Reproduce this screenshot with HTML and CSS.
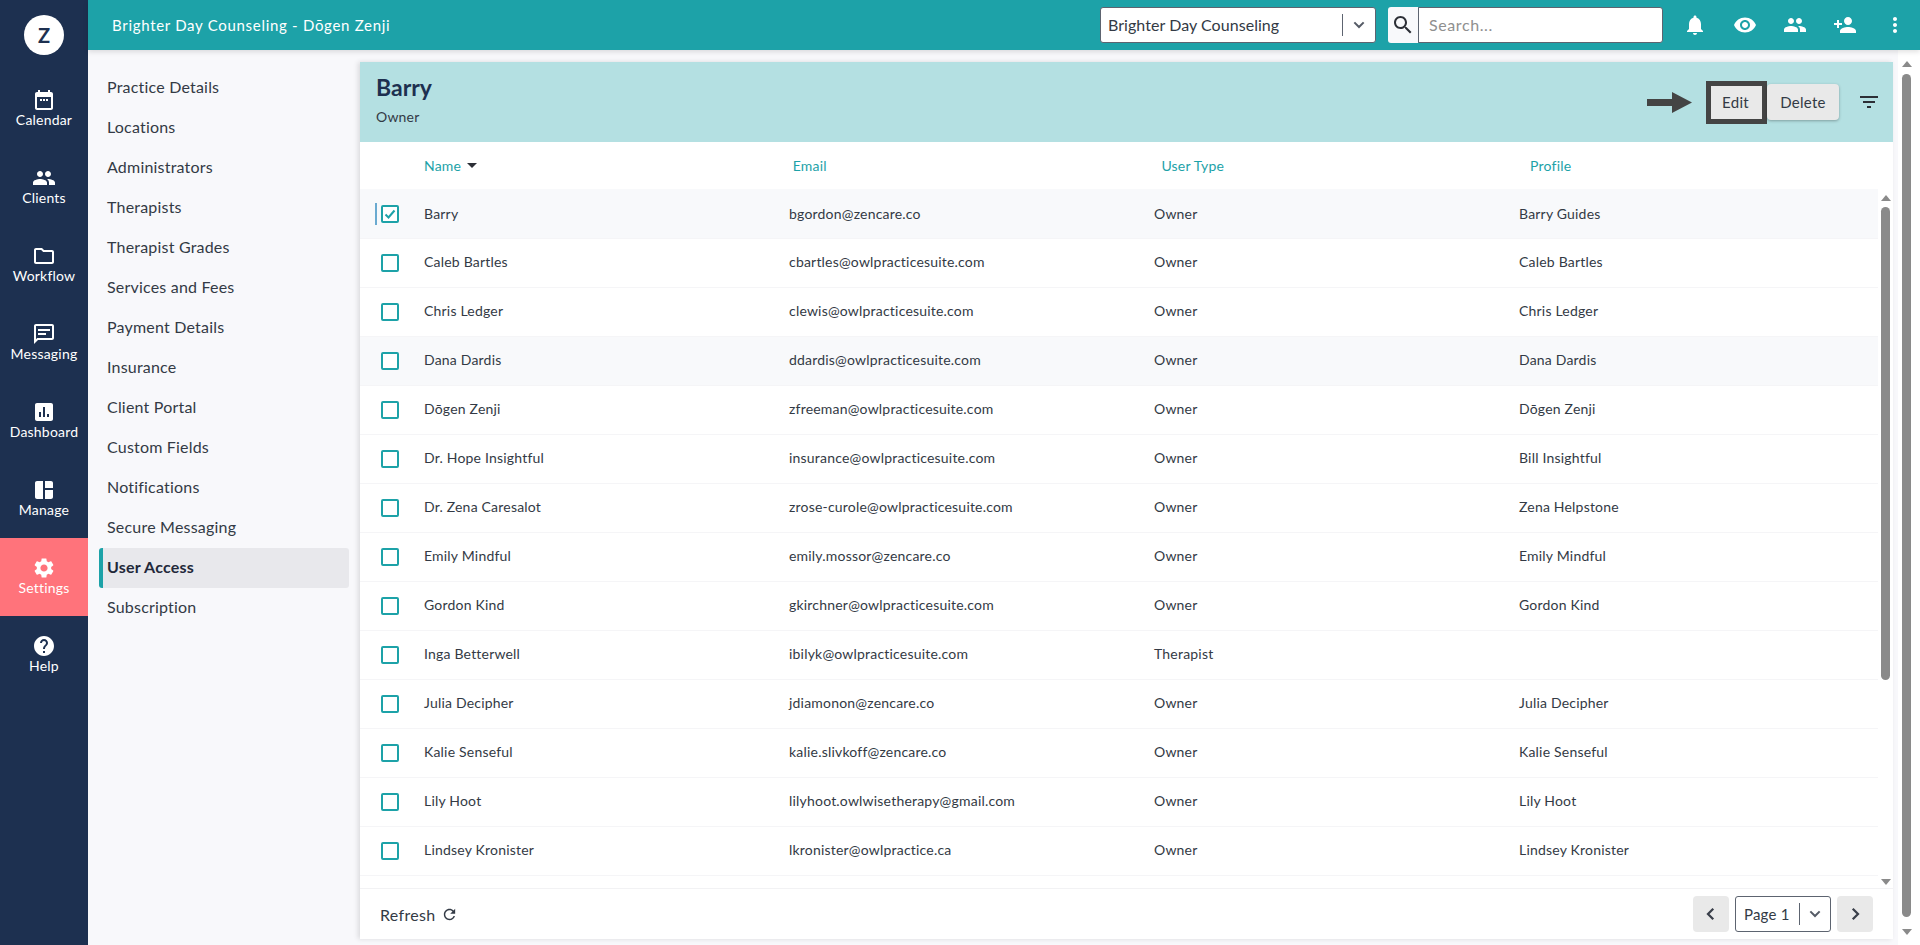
FILE: index.html
```html
<!DOCTYPE html>
<html lang="en">
<head>
<meta charset="utf-8">
<title>User Access</title>
<link rel="stylesheet" href="styles.css">
</head>
<body>
<div class="app">
  <aside class="rail">
    <div class="logo-wrap"><div class="logo">Z</div></div>
    <nav class="rail-nav">
      <a class="rail-item"><svg class="rail-icon" viewBox="0 0 24 24"><path d="M19 4h-1V2h-2v2H8V2H6v2H5c-1.100 0-2 .9-2 2v14c0 1.100.9 2 2 2h14c1.100 0 2-.9 2-2V6c0-1.100-.9-2-2-2zm0 16H5V9h14v11zM8 11h2v2H8zm3 0h2v2h-2zm3 0h2v2h-2z"/></svg><span>Calendar</span></a>
      <a class="rail-item"><svg class="rail-icon" viewBox="0 0 24 24"><path d="M16 11c1.660 0 2.990-1.340 2.990-3S17.660 5 16 5c-1.660 0-3 1.340-3 3s1.340 3 3 3zm-8 0c1.660 0 2.990-1.340 2.990-3S9.660 5 8 5C6.340 5 5 6.340 5 8s1.340 3 3 3zm0 2c-2.330 0-7 1.170-7 3.500V19h14v-2.500c0-2.330-4.670-3.500-7-3.500zm8 0c-.29 0-.62.02-.97.05 1.160.84 1.970 1.970 1.970 3.450V19h6v-2.500c0-2.330-4.670-3.500-7-3.500z"/></svg><span>Clients</span></a>
      <a class="rail-item"><svg class="rail-icon" viewBox="0 0 24 24"><path d="M9.170 6l2 2H20v10H4V6h5.170M10 4H4c-1.100 0-1.990.9-1.990 2L2 18c0 1.100.9 2 2 2h16c1.100 0 2-.9 2-2V8c0-1.100-.9-2-2-2h-8l-2-2z"/></svg><span>Workflow</span></a>
      <a class="rail-item"><svg class="rail-icon" viewBox="0 0 24 24"><path d="M20 2H4c-1.100 0-2 .9-2 2v18l4-4h14c1.100 0 2-.9 2-2V4c0-1.100-.9-2-2-2zm0 14H5.200L4 17.200V4h16v12zM6 11h8v2H6zM6 7h12v2H6z"/></svg><span>Messaging</span></a>
      <a class="rail-item"><svg class="rail-icon" viewBox="0 0 24 24"><path d="M19 3H5c-1.100 0-2 .9-2 2v14c0 1.100.9 2 2 2h14c1.100 0 2-.9 2-2V5c0-1.100-.9-2-2-2zM9 17H7v-5h2v5zm4 0h-2V7h2v10zm4 0h-2v-3h2v3z"/></svg><span>Dashboard</span></a>
      <a class="rail-item"><svg class="rail-icon" viewBox="0 0 24 24"><path d="M5 3h6v18H5c-1.100 0-2-.9-2-2V5c0-1.100.9-2 2-2zm8 0h6c1.100 0 2 .9 2 2v5h-8V3zm0 9h8v7c0 1.100-.9 2-2 2h-6v-9z"/></svg><span>Manage</span></a>
      <a class="rail-item is-active"><svg class="rail-icon" viewBox="0 0 24 24"><path d="M19.140 12.940c.04-.3.06-.61.06-.94 0-.32-.02-.64-.07-.94l2.030-1.580c.18-.14.23-.41.12-.61l-1.920-3.320c-.12-.22-.37-.29-.59-.22l-2.390.96c-.5-.38-1.030-.7-1.620-.94l-.36-2.540c-.04-.24-.24-.41-.48-.41h-3.840c-.24 0-.43.17-.47.41l-.36 2.540c-.59.24-1.130.57-1.620.94l-2.390-.96c-.22-.08-.47 0-.59.22L2.740 8.870c-.12.21-.08.47.12.61l2.030 1.580c-.05.3-.09.63-.09.94s.02.64.07.94l-2.030 1.580c-.18.14-.23.41-.12.61l1.920 3.320c.12.22.37.29.59.22l2.390-.96c.5.38 1.030.7 1.620.94l.36 2.540c.05.24.24.41.48.41h3.840c.24 0 .44-.17.47-.41l.36-2.540c.59-.24 1.130-.56 1.620-.94l2.390.96c.22.08.47 0 .59-.22l1.920-3.320c.12-.22.07-.47-.12-.61l-2.010-1.580zM12 15.600c-1.980 0-3.600-1.620-3.600-3.600s1.620-3.600 3.600-3.600 3.600 1.620 3.600 3.600-1.620 3.600-3.600 3.600z"/></svg><span>Settings</span></a>
      <a class="rail-item"><svg class="rail-icon" viewBox="0 0 24 24"><path d="M12 2C6.480 2 2 6.480 2 12s4.480 10 10 10 10-4.480 10-10S17.520 2 12 2zm1 17h-2v-2h2v2zm2.070-7.750l-.9.920C13.450 12.900 13 13.500 13 15h-2v-.5c0-1.100.45-2.100 1.170-2.830l1.240-1.260c.37-.36.59-.86.59-1.410 0-1.100-.9-2-2-2s-2 .9-2 2H8c0-2.210 1.790-4 4-4s4 1.790 4 4c0 .88-.36 1.680-.93 2.250z"/></svg><span>Help</span></a>
    </nav>
  </aside>

  <div class="main">
    <header class="topbar">
      <div class="topbar-title">Brighter Day Counseling - Dōgen Zenji</div>
      <div class="topbar-tools">
        <div class="select-box">
          <span class="select-value">Brighter Day Counseling</span>
          <span class="select-div"></span>
          <svg class="chev" viewBox="0 0 24 24"><path d="M5 8l7 7 7-7" fill="none" stroke="#555b66" stroke-width="3"/></svg>
        </div>
        <div class="search">
          <div class="search-btn"><svg viewBox="0 0 24 24"><path d="M15.500 14h-.79l-.28-.27C15.410 12.590 16 11.110 16 9.500 16 5.910 13.090 3 9.500 3S3 5.910 3 9.500 5.910 16 9.500 16c1.610 0 3.090-.59 4.230-1.570l.27.28v.79l5 4.990L20.490 19l-4.990-5zm-6 0C7.010 14 5 11.990 5 9.500S7.010 5 9.500 5 14 7.010 14 9.500 11.990 14 9.500 14z"/></svg></div>
          <div class="search-input">Search...</div>
        </div>
        <div class="top-icons">
          <svg viewBox="0 0 24 24"><path d="M12 22c1.100 0 2-.9 2-2h-4c0 1.100.9 2 2 2zm6-6v-5c0-3.070-1.630-5.640-4.500-6.320V4c0-.83-.67-1.500-1.500-1.500s-1.500.67-1.500 1.500v.68C7.640 5.360 6 7.920 6 11v5l-2 2v1h16v-1l-2-2z"/></svg>
          <svg viewBox="0 0 24 24"><path d="M12 4.500C7 4.500 2.730 7.610 1 12c1.730 4.390 6 7.500 11 7.500s9.270-3.110 11-7.500c-1.730-4.390-6-7.500-11-7.500zM12 17c-2.760 0-5-2.240-5-5s2.240-5 5-5 5 2.240 5 5-2.240 5-5 5zm0-8c-1.660 0-3 1.340-3 3s1.340 3 3 3 3-1.340 3-3-1.340-3-3-3z"/></svg>
          <svg viewBox="0 0 24 24"><path d="M16 11c1.660 0 2.990-1.340 2.990-3S17.660 5 16 5c-1.660 0-3 1.340-3 3s1.340 3 3 3zm-8 0c1.660 0 2.990-1.340 2.990-3S9.660 5 8 5C6.340 5 5 6.340 5 8s1.340 3 3 3zm0 2c-2.330 0-7 1.170-7 3.500V19h14v-2.500c0-2.330-4.670-3.500-7-3.500zm8 0c-.29 0-.62.02-.97.05 1.160.84 1.970 1.970 1.970 3.450V19h6v-2.500c0-2.330-4.670-3.500-7-3.500z"/></svg>
          <svg viewBox="0 0 24 24"><path d="M15 12c2.210 0 4-1.790 4-4s-1.790-4-4-4-4 1.790-4 4 1.790 4 4 4zm-9-2V7H4v3H1v2h3v3h2v-3h3v-2H6zm9 4c-2.670 0-8 1.340-8 4v2h16v-2c0-2.660-5.330-4-8-4z"/></svg>
          <svg viewBox="0 0 24 24"><path d="M12 8c1.100 0 2-.9 2-2s-.9-2-2-2-2 .9-2 2 .9 2 2 2zm0 2c-1.100 0-2 .9-2 2s.9 2 2 2 2-.9 2-2-.9-2-2-2zm0 6c-1.100 0-2 .9-2 2s.9 2 2 2 2-.9 2-2-.9-2-2-2z"/></svg>
        </div>
      </div>
    </header>

    <div class="body">
      <nav class="subnav">
        <a class="sub-item">Practice Details</a>
        <a class="sub-item">Locations</a>
        <a class="sub-item">Administrators</a>
        <a class="sub-item">Therapists</a>
        <a class="sub-item">Therapist Grades</a>
        <a class="sub-item">Services and Fees</a>
        <a class="sub-item">Payment Details</a>
        <a class="sub-item">Insurance</a>
        <a class="sub-item">Client Portal</a>
        <a class="sub-item">Custom Fields</a>
        <a class="sub-item">Notifications</a>
        <a class="sub-item">Secure Messaging</a>
        <a class="sub-item is-active">User Access</a>
        <a class="sub-item">Subscription</a>
      </nav>

      <section class="panel">
        <div class="panel-head">
          <div class="panel-titles">
            <h1 class="panel-title">Barry</h1>
            <div class="panel-sub">Owner</div>
          </div>
          <div class="panel-actions">
            <svg class="arrow" viewBox="0 0 45 21"><path d="M0 7h25V0l20 10.500L25 21v-7H0z"/></svg>
            <button class="btn btn-edit">Edit</button>
            <button class="btn btn-delete">Delete</button>
            <svg class="filter" viewBox="0 0 18 12"><path d="M0 0h18v2H0zM3 5h12v2H3zM7 10h4v2H7z"/></svg>
          </div>
        </div>

        <div class="thead">
          <div class="th">Name <span class="sort"></span></div>
          <div class="th">Email</div>
          <div class="th">User Type</div>
          <div class="th">Profile</div>
        </div>

        <div class="tscroll">
          <div class="rows">
            <div class="row is-selected"><span class="mark"></span><span class="check"><svg viewBox="0 0 14 14"><path d="M2.500 7.500l3 3 6-7" fill="none" stroke="#1da2a8" stroke-width="2"/></svg></span><span class="cell">Barry</span><span class="cell">bgordon@zencare.co</span><span class="cell">Owner</span><span class="cell">Barry Guides</span></div>
            <div class="row"><span class="check"></span><span class="cell">Caleb Bartles</span><span class="cell">cbartles@owlpracticesuite.com</span><span class="cell">Owner</span><span class="cell">Caleb Bartles</span></div>
            <div class="row"><span class="check"></span><span class="cell">Chris Ledger</span><span class="cell">clewis@owlpracticesuite.com</span><span class="cell">Owner</span><span class="cell">Chris Ledger</span></div>
            <div class="row is-alt"><span class="check"></span><span class="cell">Dana Dardis</span><span class="cell">ddardis@owlpracticesuite.com</span><span class="cell">Owner</span><span class="cell">Dana Dardis</span></div>
            <div class="row"><span class="check"></span><span class="cell">Dōgen Zenji</span><span class="cell">zfreeman@owlpracticesuite.com</span><span class="cell">Owner</span><span class="cell">Dōgen Zenji</span></div>
            <div class="row"><span class="check"></span><span class="cell">Dr. Hope Insightful</span><span class="cell">insurance@owlpracticesuite.com</span><span class="cell">Owner</span><span class="cell">Bill Insightful</span></div>
            <div class="row"><span class="check"></span><span class="cell">Dr. Zena Caresalot</span><span class="cell">zrose-curole@owlpracticesuite.com</span><span class="cell">Owner</span><span class="cell">Zena Helpstone</span></div>
            <div class="row"><span class="check"></span><span class="cell">Emily Mindful</span><span class="cell">emily.mossor@zencare.co</span><span class="cell">Owner</span><span class="cell">Emily Mindful</span></div>
            <div class="row"><span class="check"></span><span class="cell">Gordon Kind</span><span class="cell">gkirchner@owlpracticesuite.com</span><span class="cell">Owner</span><span class="cell">Gordon Kind</span></div>
            <div class="row"><span class="check"></span><span class="cell">Inga Betterwell</span><span class="cell">ibilyk@owlpracticesuite.com</span><span class="cell">Therapist</span><span class="cell"></span></div>
            <div class="row"><span class="check"></span><span class="cell">Julia Decipher</span><span class="cell">jdiamonon@zencare.co</span><span class="cell">Owner</span><span class="cell">Julia Decipher</span></div>
            <div class="row"><span class="check"></span><span class="cell">Kalie Senseful</span><span class="cell">kalie.slivkoff@zencare.co</span><span class="cell">Owner</span><span class="cell">Kalie Senseful</span></div>
            <div class="row"><span class="check"></span><span class="cell">Lily Hoot</span><span class="cell">lilyhoot.owlwisetherapy@gmail.com</span><span class="cell">Owner</span><span class="cell">Lily Hoot</span></div>
            <div class="row"><span class="check"></span><span class="cell">Lindsey Kronister</span><span class="cell">lkronister@owlpractice.ca</span><span class="cell">Owner</span><span class="cell">Lindsey Kronister</span></div>
          </div>
          <div class="sbar sbar-inner"><span class="sb-up"></span><span class="sb-thumb"></span><span class="sb-down"></span></div>
        </div>

        <div class="panel-foot">
          <div class="refresh">Refresh <svg viewBox="0 0 24 24"><path d="M17.650 6.350C16.200 4.900 14.210 4 12 4c-4.420 0-7.990 3.580-7.990 8s3.570 8 7.990 8c3.730 0 6.840-2.550 7.730-6h-2.080c-.82 2.330-3.040 4-5.650 4-3.310 0-6-2.690-6-6s2.690-6 6-6c1.660 0 3.140.69 4.220 1.780L13 11h7V4l-2.350 2.350z"/></svg></div>
          <div class="pager">
            <button class="page-btn"><svg viewBox="0 0 24 24"><path d="M15 5l-7 7 7 7" fill="none" stroke="#3a3f4a" stroke-width="3"/></svg></button>
            <div class="page-select"><span>Page 1</span><span class="select-div page-div"></span><svg class="chev" viewBox="0 0 24 24"><path d="M5 8l7 7 7-7" fill="none" stroke="#555b66" stroke-width="3"/></svg></div>
            <button class="page-btn"><svg viewBox="0 0 24 24"><path d="M9 5l7 7-7 7" fill="none" stroke="#3a3f4a" stroke-width="3"/></svg></button>
          </div>
        </div>
      </section>

      <div class="sbar sbar-outer"><span class="sb-up"></span><span class="sb-thumb"></span><span class="sb-down"></span></div>
    </div>
  </div>
</div>
</body>
</html>
```

FILE: styles.css
```css
* { box-sizing: border-box; }
html, body { margin: 0; height: 100%; overflow: hidden; }
body { font-family: "Lato", "Open Sans", sans-serif; color: #333a45; background: #f8f8fb; }

.app { display: flex; height: 945px; }

/* left rail */
.rail { width: 88px; flex: none; background: #1d3050; color: #fff; display: flex; flex-direction: column; }
.logo-wrap { height: 70px; display: flex; padding-top: 15px; justify-content: center; }
.logo { width: 40px; height: 40px; border-radius: 50%; background: #fff; color: #1d3050; font: 700 20px/40px "Lato", sans-serif; text-align: center; }
.rail-nav { display: flex; flex-direction: column; }
.rail-item { height: 78px; display: flex; flex-direction: column; align-items: center; padding-top: 18px; font-size: 14px; line-height: 18px; letter-spacing: .2px; }
.rail-item.is-active { background: #ff737b; }
.rail-icon { width: 24px; height: 24px; fill: #fff; margin-bottom: -1px; }

/* top bar */
.main { flex: 1; min-width: 0; display: flex; flex-direction: column; }
.topbar { height: 50px; flex: none; background: #1da2a8; display: flex; align-items: center; padding-left: 24px; color: #fff; box-shadow: 0 2px 5px rgba(0,0,0,.12); position: relative; z-index: 2; }
.topbar-title { font-size: 15px; letter-spacing: .7px; }
.topbar-tools { margin-left: auto; display: flex; align-items: center; }
.select-box { width: 276px; height: 36px; background: #fff; border: 1px solid #5d6470; border-radius: 3px; display: flex; align-items: center; padding-left: 7px; color: #333a45; font-size: 16px; letter-spacing: .05px; }
.select-value { flex: 1; padding-bottom: 2px; }
.select-div { width: 1px; height: 22px; background: #5d6470; }
.chev { width: 16px; height: 16px; margin: 0 8px; flex: none; }
.search { display: flex; margin-left: 12px; height: 36px; }
.search-btn { width: 30px; background: #f8f9fb; border-radius: 3px 0 0 3px; display: flex; align-items: center; justify-content: center; }
.search-btn svg { width: 24px; height: 24px; fill: #2c2f36; }
.search-input { width: 245px; background: #fff; border: 1px solid #5d6470; border-radius: 0 3px 3px 0; padding-left: 10px; color: #8f8f8f; font-size: 16px; line-height: 34px; letter-spacing: .6px; }
.top-icons { display: flex; margin-left: 20px; width: 237px; }
.top-icons svg { width: 24px; height: 24px; fill: #fff; margin-right: 26px; flex: none; }

/* body */
.body { flex: 1; min-height: 0; display: flex; }
.subnav { width: 272px; flex: none; padding: 18px 11px 0; display: flex; flex-direction: column; }
.sub-item { height: 40px; line-height: 38px; padding-left: 8px; border-radius: 3px; font-size: 16px; letter-spacing: .2px; color: #333a45; }
.sub-item.is-active { background: #e8e8ec; border-left: 4px solid #1da2a8; padding-left: 4px; font-weight: 700; color: #22283a; }

/* panel */
.panel { width: 1533px; flex: none; margin: 12px 0 6px; background: #fff; box-shadow: -2px 0 5px rgba(0,0,0,.12); display: flex; flex-direction: column; }
.panel-head { height: 80px; flex: none; background: #b4e0e2; display: flex; justify-content: space-between; padding: 0 15px 0 16px; }
.panel-title { margin: 9px 0 0; font-size: 23px; line-height: 32px; font-weight: 700; color: #1d3050; }
.panel-sub { margin-top: 5px; font-size: 14px; line-height: 18px; letter-spacing: .2px; }
.panel-actions { display: flex; align-items: center; }
.arrow { width: 45px; height: 21px; fill: #444; margin-right: 14px; }
.btn { font: 15px "Lato", sans-serif; letter-spacing: .3px; color: #333a45; background: #e9e9e9; border: 0; padding: 0; }
.btn-edit { width: 61px; height: 43px; border: 5px solid #444; padding-right: 2px; }
.btn-delete { width: 72px; height: 36px; border-radius: 4px; box-shadow: 0 1px 3px rgba(0,0,0,.3); }
.filter { width: 18px; height: 12px; fill: #2c2f36; margin-left: 21px; }

/* table */
.thead { height: 47px; flex: none; display: grid; grid-template-columns: repeat(4, 368.700px); padding-left: 64px; align-items: center; }
.th { color: #1da2a8; font-size: 14px; letter-spacing: .2px; display: flex; align-items: center; }
.sort { width: 0; height: 0; margin-left: 6px; border: 5px solid transparent; border-top-color: #2c2f36; border-bottom: 0; }
.tscroll { flex: 1; min-height: 0; display: flex; border-bottom: 1px solid #f2f2f4; }
.rows { flex: 1; min-width: 0; overflow: hidden; }
.row { position: relative; height: 49px; display: grid; grid-template-columns: 64px 365px 365px 365px 1fr; align-items: center; border-bottom: 1px solid #f5f5f7; font-size: 14px; letter-spacing: .2px; color: #333a45; }
.row.is-selected { height: 50px; background: #f8f9fb; }
.row.is-alt { background: #f8f9fb; }
.cell { padding-bottom: 4px; }
.is-selected .cell { padding-bottom: 1px; }
.check { width: 18px; height: 18px; margin-left: 21px; border: 2px solid #1da2a8; border-radius: 2px; background: #fff; display: flex; }
.check svg { width: 14px; height: 14px; }
.mark { position: absolute; left: 15px; top: 14px; width: 2px; height: 22px; background: #6aaad0; }

/* scrollbars */
.sbar { flex: none; display: flex; flex-direction: column; align-items: center; background: #fff; }
.sbar-inner { width: 15px; padding: 6px 0 3px; }
.sbar-outer { width: 22px; margin-left: 5px; padding: 11px 5px 10px 0; }
.sb-up, .sb-down { width: 0; height: 0; border: 5px solid transparent; flex: none; }
.sb-up { border-bottom: 6px solid #8a8a8a; border-top: 0; }
.sb-down { border-top: 6px solid #8a8a8a; border-bottom: 0; margin-top: auto; }
.sb-thumb { width: 9px; background: #8a8a8a; border-radius: 5px; margin-top: 6px; }
.sbar-inner .sb-thumb { height: 473px; }
.sbar-outer .sb-thumb { height: 843px; margin-top: 7px; }

/* footer */
.panel-foot { height: 50px; flex: none; display: flex; justify-content: space-between; align-items: center; padding: 0 20px; }
.refresh { display: flex; align-items: center; font-size: 16px; letter-spacing: .3px; }
.refresh svg { width: 17px; height: 17px; margin-left: 6px; fill: #333a45; }
.pager { display: flex; gap: 6px; }
.page-btn { width: 36px; height: 36px; padding: 0; border: 0; background: #e9e9e9; border-radius: 4px; display: flex; align-items: center; justify-content: center; }
.page-btn svg { width: 18px; height: 18px; }
.page-select { width: 96px; height: 36px; border: 1px solid #5d6470; border-radius: 3px; display: flex; align-items: center; padding-left: 8px; font-size: 15px; letter-spacing: .2px; }
.page-select span:first-child { flex: 1; }
.page-select .chev { margin: 0 7px; }
```
